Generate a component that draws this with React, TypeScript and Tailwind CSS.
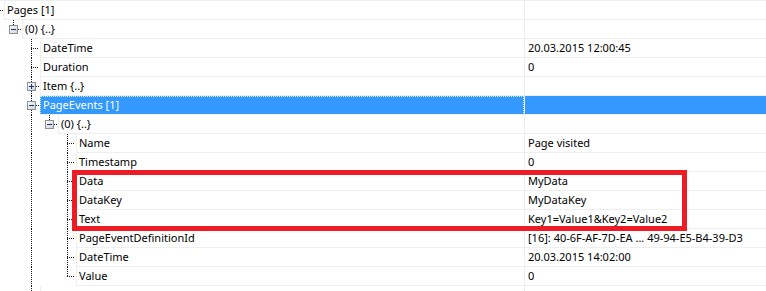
import React from 'react';

type Row = {
  level: number;
  label: string;
  value?: string;
  box?: 'plus' | 'minus';
  last?: boolean;
  guides?: number[];
  selected?: boolean;
};

const rows: Row[] = [
  { level: 0, label: 'Pages [1]', last: true },
  { level: 1, label: '(0) {..}', box: 'minus', last: true },
  { level: 2, label: 'DateTime', value: '20.03.2015 12:00:45' },
  { level: 2, label: 'Duration', value: '0' },
  { level: 2, label: 'Item {..}', box: 'plus' },
  { level: 2, label: 'PageEvents [1]', box: 'minus', selected: true },
  { level: 3, label: '(0) {..}', box: 'minus', last: true, guides: [2] },
  { level: 4, label: 'Name', value: 'Page visited', guides: [2] },
  { level: 4, label: 'Timestamp', value: '0', guides: [2] },
  { level: 4, label: 'Data', value: 'MyData', guides: [2] },
  { level: 4, label: 'DataKey', value: 'MyDataKey', guides: [2] },
  { level: 4, label: 'Text', value: 'Key1=Value1&Key2=Value2', guides: [2] },
  { level: 4, label: 'PageEventDefinitionId', value: '[16]: 40-6F-AF-7D-EA ... 49-94-E5-B4-39-D3', guides: [2] },
  { level: 4, label: 'DateTime', value: '20.03.2015 14:02:00', guides: [2] },
  { level: 4, label: 'Value', value: '0', last: true, guides: [2] },
  { level: 2, label: 'SitecoreDevice {..}' },
];

// guide x for a tree level
const gx = (level: number) => 18 * level - 5;

function TreeIndent({ row }: { row: Row }) {
  const width = 4 + 18 * row.level;
  const x = gx(row.level);
  const dots = { stroke: '#1a1a1a', strokeWidth: 1, strokeDasharray: '1 1' };

  return (
    <svg width={width} height={19} className="shrink-0 block">
      <defs>
        <linearGradient id="boxfill" x1="0" y1="0" x2="1" y2="1">
          <stop offset="0" stopColor="#ffffff" />
          <stop offset="1" stopColor="#c9cdd3" />
        </linearGradient>
      </defs>
      {(row.guides || []).map((k) => (
        <line key={k} x1={gx(k) + 0.5} y1={0} x2={gx(k) + 0.5} y2={19} {...dots} />
      ))}
      {row.level > 0 && (
        <line x1={x + 0.5} y1={0} x2={x + 0.5} y2={row.last ? 10 : 19} {...dots} />
      )}
      <line x1={row.box ? x + 5 : Math.max(x, 0)} y1={9.5} x2={width - 1} y2={9.5} {...dots} />
      {row.box && (
        <g>
          <rect x={x - 3.5} y={5.5} width={8} height={8} fill="url(#boxfill)" stroke="#8d9196" />
          <line x1={x - 2} y1={9.5} x2={x + 3} y2={9.5} stroke="#1f3370" />
          {row.box === 'plus' && <line x1={x + 0.5} y1={7} x2={x + 0.5} y2={12} stroke="#1f3370" />}
        </g>
      )}
    </svg>
  );
}

export default function App() {
  return (
    <div
      className="relative w-[766px] h-[291px] overflow-hidden bg-white text-[11px] leading-[18px] text-black border-t border-[#efefef]"
      style={{ fontFamily: '"Noto Sans", "Liberation Sans", sans-serif' }}
    >
      {rows.map((row, i) => (
        <div key={i} className="flex h-[19px]">
          <TreeIndent row={row} />
          <div
            className={
              row.selected
                ? 'flex-1 min-w-0 border-b border-[#efefef] bg-[#3399ff] text-white pl-[3px] outline-1 outline-dotted outline-white/80 -outline-offset-1 whitespace-nowrap'
                : 'flex-1 min-w-0 border-l border-b border-[#efefef] pl-[2px] whitespace-nowrap'
            }
          >
            {row.label}
          </div>
          <div
            className={
              row.selected
                ? 'w-[242px] shrink-0 border-l border-b border-[#efefef] bg-[#3399ff]'
                : 'w-[242px] shrink-0 border-l border-b border-[#efefef] pl-[3px] whitespace-nowrap'
            }
          >
            {row.value}
          </div>
        </div>
      ))}

      {/* red highlight annotation */}
      <div className="absolute left-[72px] top-[169px] w-[615px] h-[61px] border-[5px] border-[#ed1c24] pointer-events-none" />
    </div>
  );
}
